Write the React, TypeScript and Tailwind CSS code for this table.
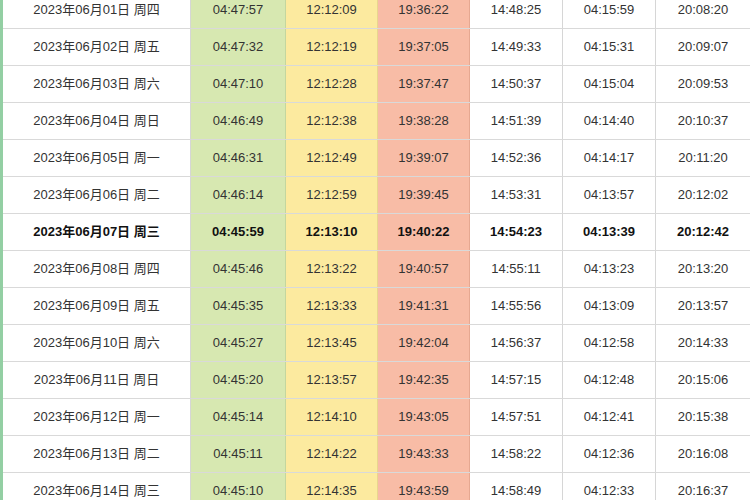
const rows: string[][] = [
  ["2023年06月01日 周四", "04:47:57", "12:12:09", "19:36:22", "14:48:25", "04:15:59", "20:08:20"],
  ["2023年06月02日 周五", "04:47:32", "12:12:19", "19:37:05", "14:49:33", "04:15:31", "20:09:07"],
  ["2023年06月03日 周六", "04:47:10", "12:12:28", "19:37:47", "14:50:37", "04:15:04", "20:09:53"],
  ["2023年06月04日 周日", "04:46:49", "12:12:38", "19:38:28", "14:51:39", "04:14:40", "20:10:37"],
  ["2023年06月05日 周一", "04:46:31", "12:12:49", "19:39:07", "14:52:36", "04:14:17", "20:11:20"],
  ["2023年06月06日 周二", "04:46:14", "12:12:59", "19:39:45", "14:53:31", "04:13:57", "20:12:02"],
  ["2023年06月07日 周三", "04:45:59", "12:13:10", "19:40:22", "14:54:23", "04:13:39", "20:12:42"],
  ["2023年06月08日 周四", "04:45:46", "12:13:22", "19:40:57", "14:55:11", "04:13:23", "20:13:20"],
  ["2023年06月09日 周五", "04:45:35", "12:13:33", "19:41:31", "14:55:56", "04:13:09", "20:13:57"],
  ["2023年06月10日 周六", "04:45:27", "12:13:45", "19:42:04", "14:56:37", "04:12:58", "20:14:33"],
  ["2023年06月11日 周日", "04:45:20", "12:13:57", "19:42:35", "14:57:15", "04:12:48", "20:15:06"],
  ["2023年06月12日 周一", "04:45:14", "12:14:10", "19:43:05", "14:57:51", "04:12:41", "20:15:38"],
  ["2023年06月13日 周二", "04:45:11", "12:14:22", "19:43:33", "14:58:22", "04:12:36", "20:16:08"],
  ["2023年06月14日 周三", "04:45:10", "12:14:35", "19:43:59", "14:58:49", "04:12:33", "20:16:37"],
]

// per-column background + divider
const cellClass = [
  "bg-white border-r border-[#d6d6d6]",
  "bg-[#d7e8b1] border-r border-[#c4d69f]",
  "bg-[#fcea9f] border-r border-[#e8d68e]",
  "bg-[#f8bca6] border-r border-[#e6a891]",
  "bg-white border-r border-[#d6d6d6]",
  "bg-white border-r border-[#d6d6d6]",
  "bg-white",
]

export default function App() {
  return (
    <div
      className="w-[750px] h-[500px] overflow-hidden bg-white text-[13px] text-[#333]"
      style={{ fontFamily: '"Liberation Sans", Arial, "Noto Sans CJK SC", sans-serif' }}
    >
      <div className="-mt-[8px] border-l-[3px] border-[#93cfa3]">
        {rows.map((r, i) => {
          const bold = r[0].includes("07日")
          return (
            <div
              key={i}
              className={`grid grid-cols-[188px_95px_92px_92px_93px_93px_1fr] h-[37px] border-b border-[#d9d9d9] ${bold ? "font-bold text-[#111]" : ""}`}
            >
              {r.map((c, j) => (
                <div key={j} className={`flex items-center justify-center ${cellClass[j]}`}>
                  {c}
                </div>
              ))}
            </div>
          )
        })}
      </div>
    </div>
  )
}
